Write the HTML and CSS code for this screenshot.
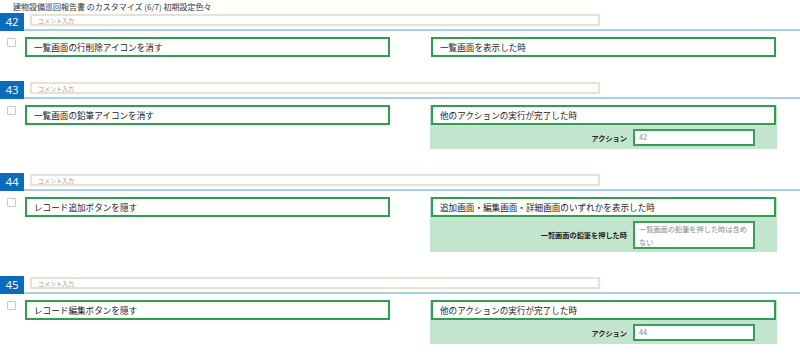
FILE: index.html
```html
<!DOCTYPE html>
<html lang="ja">
<head>
  <meta charset="UTF-8">
  <title>建物設備巡回報告書 のカスタマイズ</title>
  <meta name="viewport" content="width=device-width, initial-scale=1.0">
  <link rel="stylesheet" href="styles.css">
</head>
<body>
  <div class="page-title">建物設備巡回報告書 のカスタマイズ (6/7) 初期設定色々</div>

  <div class="item">
    <div class="item-head">
      <span class="num">42</span>
      <input type="text" class="comment" placeholder="コメント入力">
    </div>
    <div class="item-row">
      <input type="checkbox" class="check">
      <div class="box left-box">一覧画面の行削除アイコンを消す</div>
      <div class="right-col">
        <div class="box">一覧画面を表示した時</div>
      </div>
    </div>
  </div>

  <div class="item">
    <div class="item-head">
      <span class="num">43</span>
      <input type="text" class="comment" placeholder="コメント入力">
    </div>
    <div class="item-row">
      <input type="checkbox" class="check">
      <div class="box left-box">一覧画面の鉛筆アイコンを消す</div>
      <div class="right-col panel">
        <div class="box">他のアクションの実行が完了した時</div>
        <div class="opt">
          <span class="opt-label">アクション</span>
          <div class="opt-input">42</div>
        </div>
      </div>
    </div>
  </div>

  <div class="item">
    <div class="item-head">
      <span class="num">44</span>
      <input type="text" class="comment" placeholder="コメント入力">
    </div>
    <div class="item-row">
      <input type="checkbox" class="check">
      <div class="box left-box">レコード追加ボタンを隠す</div>
      <div class="right-col panel">
        <div class="box">追加画面・編集画面・詳細画面のいずれかを表示した時</div>
        <div class="opt">
          <span class="opt-label">一覧画面の鉛筆を押した時</span>
          <div class="opt-input opt-area">一覧画面の鉛筆を押した時は含めない</div>
        </div>
      </div>
    </div>
  </div>

  <div class="item">
    <div class="item-head">
      <span class="num">45</span>
      <input type="text" class="comment" placeholder="コメント入力">
    </div>
    <div class="item-row">
      <input type="checkbox" class="check">
      <div class="box left-box">レコード編集ボタンを隠す</div>
      <div class="right-col panel">
        <div class="box">他のアクションの実行が完了した時</div>
        <div class="opt">
          <span class="opt-label">アクション</span>
          <div class="opt-input">44</div>
        </div>
      </div>
    </div>
  </div>
</body>
</html>
```

FILE: styles.css
```css
html, body {
  margin: 0;
  padding: 0;
  background: #fff;
  font-family: "Noto Sans CJK JP", "Noto Sans", sans-serif;
  color: #333;
  overflow: hidden;
}

.page-title {
  height: 13px;
  line-height: 13px;
  padding-left: 13px;
  font-size: 8px;
  color: #333;
}

.item {
  margin-bottom: 24px;
}

.item-head {
  display: flex;
  align-items: center;
  height: 16px;
  border-bottom: 2px solid #a6cfec;
}

.num {
  width: 24px;
  height: 18px;
  margin-bottom: -2px;
  background: #0b6cbd;
  color: #fff;
  font-family: "Open Sans", "Noto Sans", sans-serif;
  font-size: 11.5px;
  line-height: 18px;
  text-align: center;
}

.comment {
  width: 570px;
  height: 12px;
  margin: 0 0 2px 6px;
  padding: 0 0 0 6px;
  box-sizing: border-box;
  border: 2px solid #ece0d4;
  font-family: inherit;
  font-size: 6px;
  outline: none;
}

.comment::placeholder {
  color: #999;
}

.item-row {
  display: flex;
  align-items: flex-start;
  padding-top: 6px;
}

.check {
  appearance: none;
  width: 9px;
  height: 9px;
  margin: 1px 9px 0 7px;
  border: 1px solid #c9c9c9;
  border-radius: 1px;
  background: #fff;
  flex-shrink: 0;
}

.box {
  height: 20px;
  box-sizing: border-box;
  border: 2px solid #2f9e50;
  background: #fff;
  padding-left: 7px;
  font-size: 8.6px;
  line-height: 16px;
  color: #222;
  white-space: nowrap;
}

.left-box {
  width: 365px;
}

.right-col {
  width: 347px;
  margin-left: 40px;
  padding: 0 1px;
  box-sizing: border-box;
}

.panel {
  background: #c4e5cd;
  padding-bottom: 3px;
}

.opt {
  display: flex;
  justify-content: flex-end;
  align-items: center;
  gap: 6px;
  padding: 4px 21px 0 0;
}

.opt-label {
  font-size: 7.2px;
  font-weight: bold;
  color: #222;
}

.opt-input {
  width: 122px;
  height: 17px;
  box-sizing: border-box;
  border: 2px solid #3a9e58;
  background: #fff;
  padding-left: 4px;
  font-size: 7.2px;
  line-height: 13px;
  color: #888;
}

.opt-area {
  height: 28px;
  line-height: 12.5px;
  padding-top: 0;
  padding-right: 6px;
}
```
